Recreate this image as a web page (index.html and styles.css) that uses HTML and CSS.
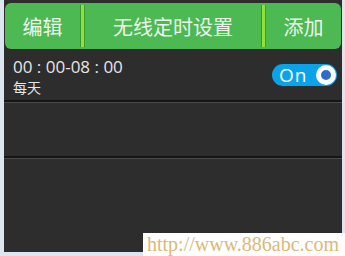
FILE: index.html
```html
<!DOCTYPE html>
<html>
<head>
<meta charset="utf-8">
<link rel="stylesheet" href="styles.css">
</head>
<body>
<div class="frame">
  <div class="screen">
    <div class="topbar">
      <div class="btn edit">编辑</div>
      <div class="sep"></div>
      <div class="title">无线定时设置</div>
      <div class="sep"></div>
      <div class="btn add">添加</div>
    </div>
    <div class="row">
      <div class="info">
        <div class="time">00 : 00-08 : 00</div>
        <div class="days">每天</div>
      </div>
      <div class="toggle"><span class="on">On</span><span class="knob"></span></div>
    </div>
    <div class="row empty"></div>
    <div class="rest"></div>
  </div>
  <div class="watermark">http://www.886abc.com</div>
</div>
</body>
</html>
```
FILE: styles.css
```css
html, body { margin: 0; padding: 0; }
body { width: 345px; height: 256px; overflow: hidden; background: #dbe6ef; font-family: "Noto Sans CJK SC", "Liberation Sans", sans-serif; }
.frame { position: relative; width: 345px; height: 256px; }
.screen { margin-left: 4px; width: 338px; height: 252px; background: #2e2d2d; padding-top: 3px; box-sizing: border-box; display: flex; flex-direction: column; }
.topbar { margin: 0 1px; height: 46px; flex: none; background: #4cb952; border-radius: 6px; display: flex; align-items: center; color: #eef6ee; font-size: 20px; }
.btn { width: 75px; text-align: center; }
.title { flex: 1; text-align: center; }
.sep { width: 3px; height: 42px; background: #8ee23a; border-left: 1px solid #3a9630; border-right: 1px solid #3f9c34; }
.row { height: 51px; flex: none; display: flex; align-items: flex-start; justify-content: space-between; padding: 0 5px 0 9px; border-bottom: 2px solid #161616; box-shadow: 0 1px 0 #4a4a4a; margin-bottom: 1px; }
.row.empty { height: 53px; }
.info { color: #e6e6e6; padding-top: 6px; }
.time { font-family: "Open Sans", "Liberation Sans", sans-serif; font-size: 17px; line-height: 23px; }
.days { font-size: 14px; line-height: 18px; }
.toggle { width: 65px; height: 22px; border-radius: 11px; background: #0aa3ea; display: flex; align-items: center; justify-content: space-between; padding: 0 1px 0 7px; box-sizing: border-box; margin-top: 15px; }
.on { color: #fff; font-family: "Open Sans", "Liberation Sans", sans-serif; font-size: 19px; line-height: 22px; letter-spacing: 1px; }
.knob { width: 20px; height: 20px; border-radius: 50%; background: #fff; position: relative; }
.knob::after { content: ""; position: absolute; left: 5px; top: 5px; width: 10px; height: 10px; border-radius: 50%; background: #2e6ccc; }
.rest { flex: 1; }
.watermark { position: absolute; left: 143px; top: 233px; width: 202px; height: 23px; background: #fff; color: #dcb978; font-family: "Liberation Serif", serif; font-size: 20px; line-height: 23px; padding-left: 4px; box-sizing: border-box; white-space: nowrap; }
```
